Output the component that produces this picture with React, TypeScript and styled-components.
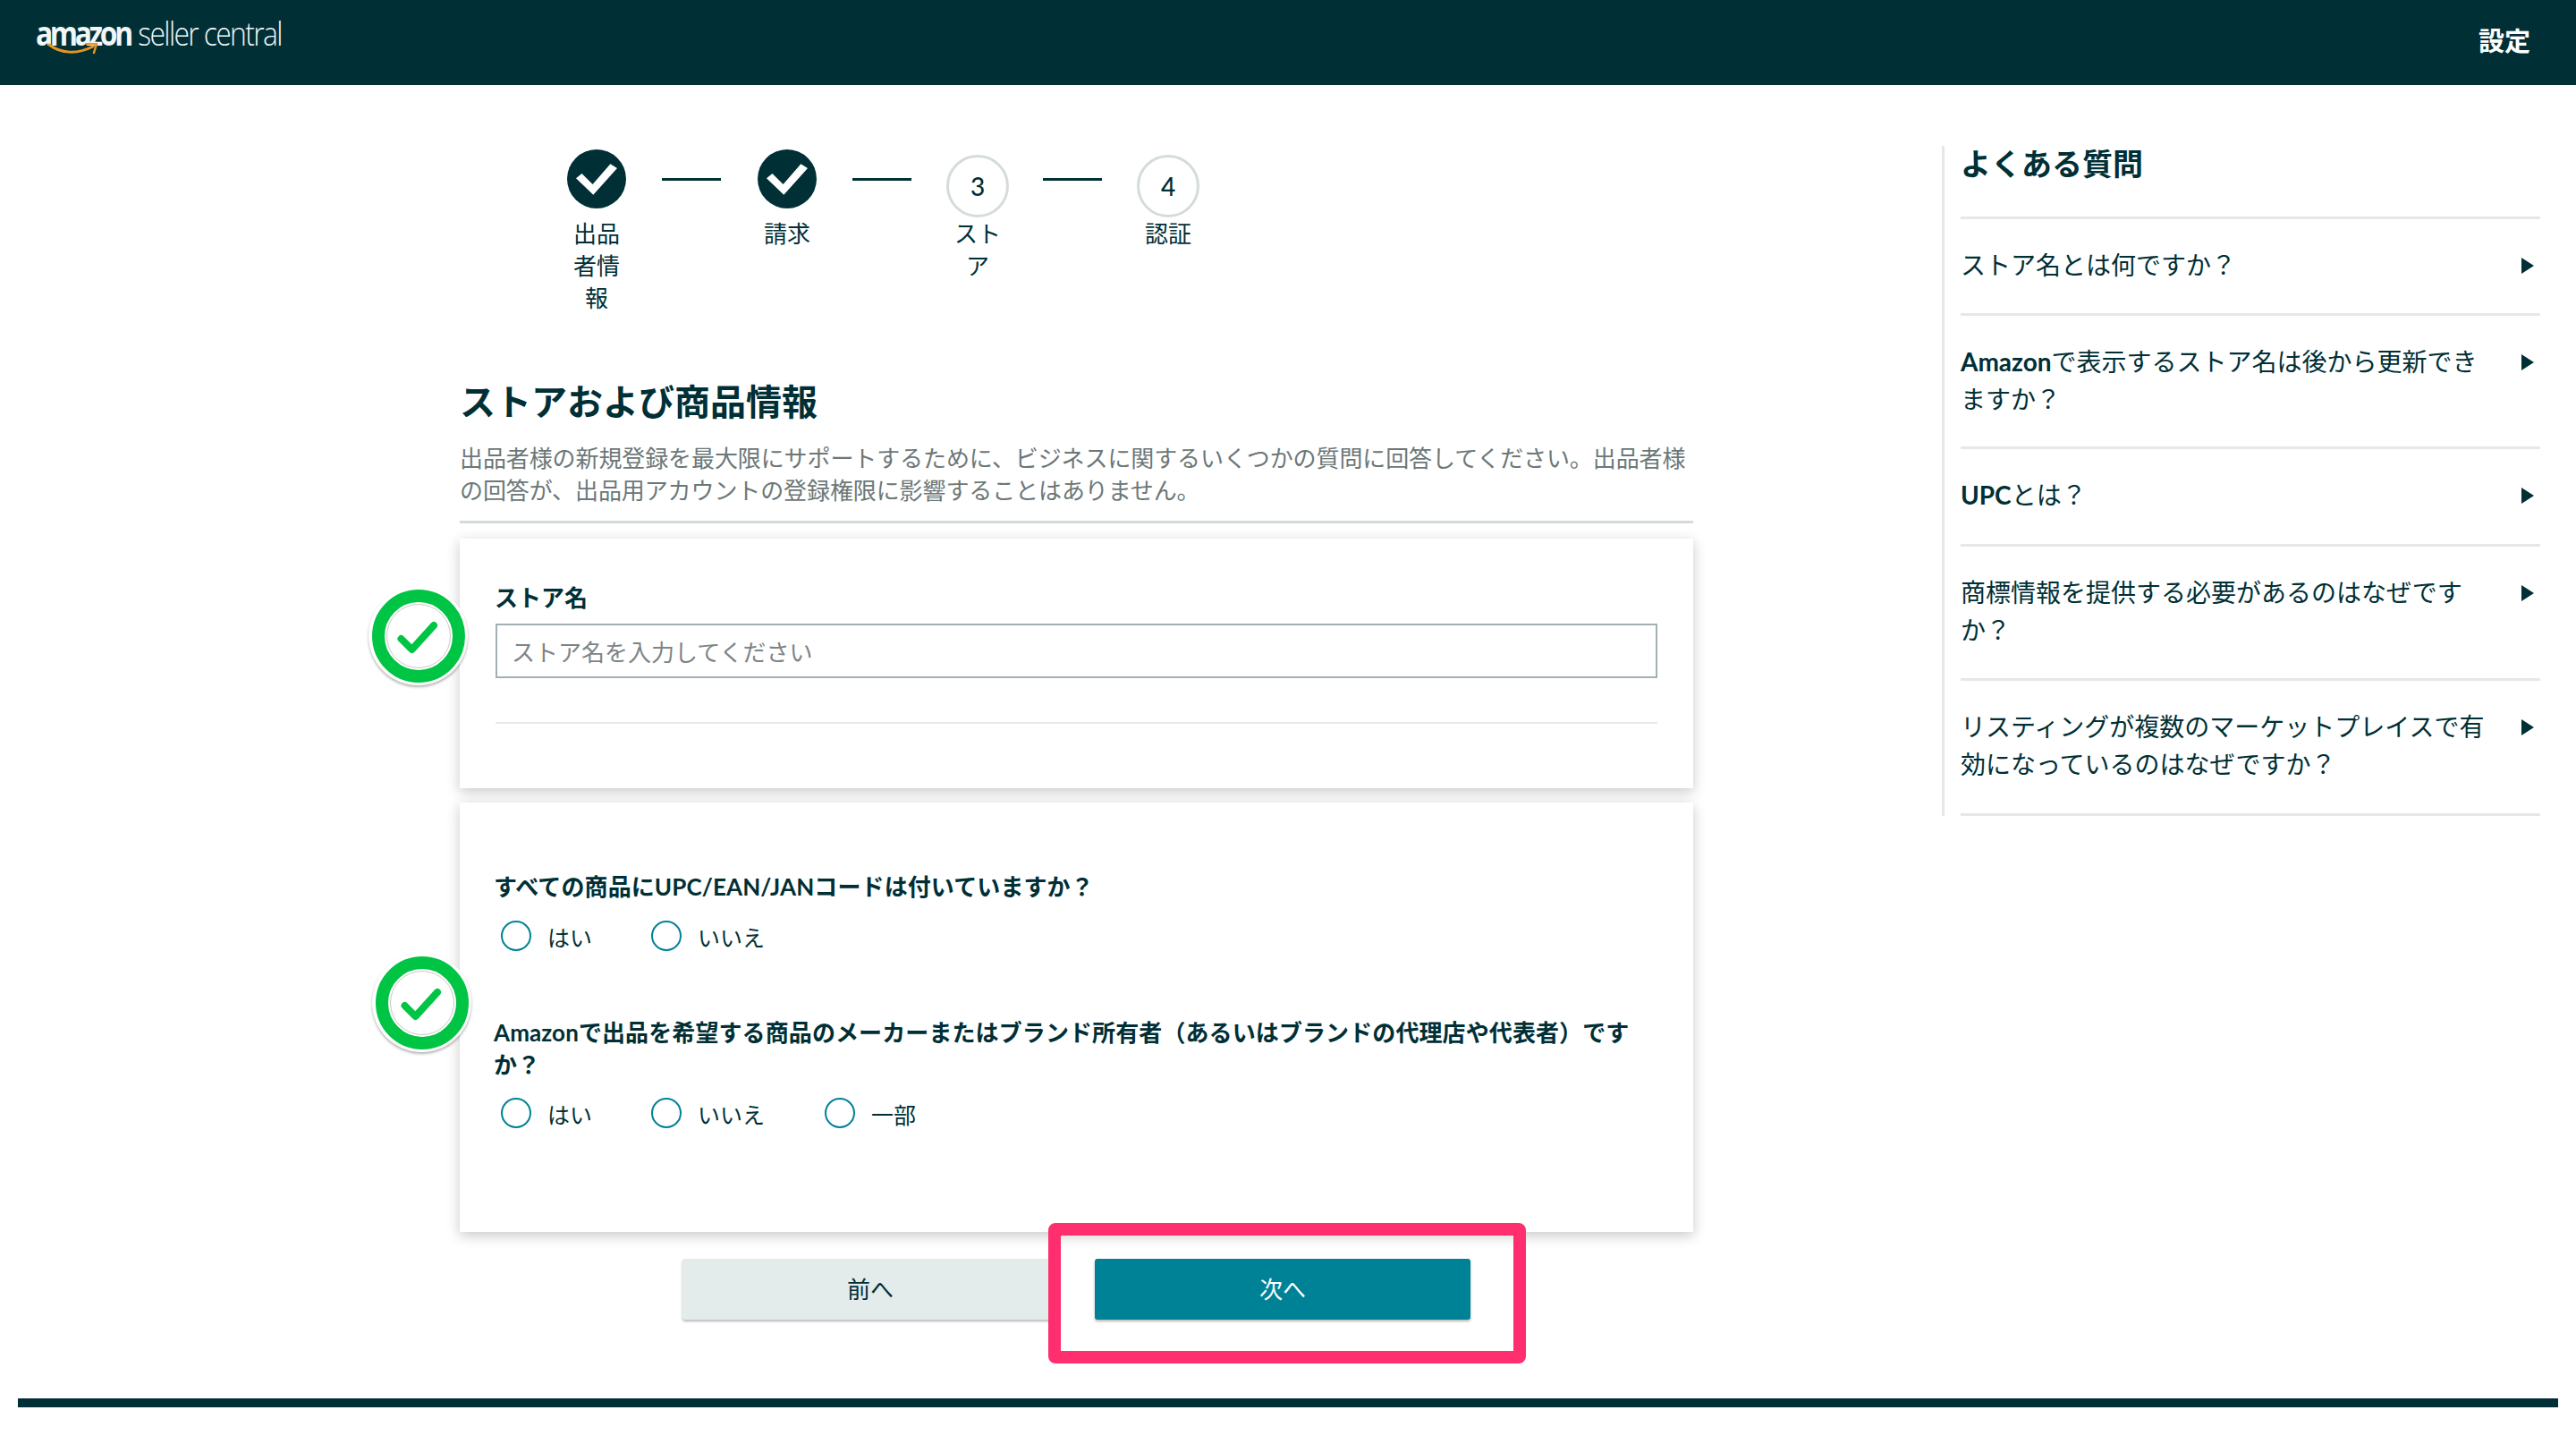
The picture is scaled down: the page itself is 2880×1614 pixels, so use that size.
import React from "react";
import styled, { createGlobalStyle } from "styled-components";

const Global = createGlobalStyle`
  html, body { margin: 0; padding: 0; background: #fff; }
  body { font-family: "Noto Sans CJK JP", "Noto Sans", sans-serif; color: #002f36; }
  * { box-sizing: border-box; }
`;
const INK = "#002f36";
const JP = `"Noto Sans CJK JP", "Noto Sans", sans-serif`;
const MIX = `Lato, "Noto Sans CJK JP", sans-serif`;

const Page = styled.div`width: 2880px; height: 1614px; overflow: hidden; display: flex; flex-direction: column; position: relative;`;
const Header = styled.header`height: 95px; background: ${INK}; display: flex; justify-content: space-between; padding: 0 51px 0 40px; flex: none;`;
const Logo = styled.div`position: relative; width: 276px; height: 66px; margin-top: 17px; color: #f2f6f6; white-space: nowrap;`;
const LogoText = styled.div`display: inline-block; font-family: "Open Sans", sans-serif; font-size: 37px; line-height: 40px; transform: scaleX(0.86); transform-origin: left center;`;
const LogoBold = styled.span`font-weight: 700; letter-spacing: -3.9px;`;
const LogoLight = styled.span`font-weight: 300; margin-left: 10px; letter-spacing: -1.9px;`;
const LogoArrow = styled.svg`position: absolute; left: 14px; top: 31px; width: 56px; height: 18px;`;
const Settings = styled.div`font: 700 29px/41px ${JP}; color: #fff; margin-top: 24px;`;

const Main = styled.main`display: flex; flex: 1; align-items: flex-start; position: relative;`;
const Left = styled.div`margin-left: 514px; width: 1379px; display: flex; flex-direction: column; position: relative;`;

const Stepper = styled.ol`list-style: none; margin: 72px 0 0; padding: 0 0 0 120px; display: flex; height: 256px; align-items: flex-start;`;
const Step = styled.li`width: 66px; display: flex; flex-direction: column; align-items: center;`;
const DoneCircle = styled.span`width: 66px; height: 66px; border-radius: 50%; background: ${INK}; display: flex; align-items: center; justify-content: center;`;
const NumCircle = styled.span`width: 70px; height: 70px; margin-top: 6px; border-radius: 50%; flex: none; background: #fff; border: 3px solid #d5dbdb; display: flex; align-items: center; justify-content: center; font: 500 28px/1 Lato, sans-serif; color: ${INK};`;
const StepLabel = styled.span<{ $pull?: boolean }>`width: 54px; margin-top: ${p => (p.$pull ? "-1px" : "9px")}; text-align: center; font: 400 26px/36px ${JP}; color: ${INK};`;
const Connector = styled.span`width: 66px; height: 3px; margin: 32px 41px 0 40px; background: ${INK}; flex: none;`;

const Title = styled.h1`margin: 0; font: 700 40px/48px ${JP}; color: ${INK};`;
const Desc = styled.p`margin: 22px 0 0; font: 400 26px/36px ${JP}; color: #6c7778; width: 1379px; letter-spacing: -0.1px;`;
const Rule = styled.div`height: 3px; background: #d5dbdb; margin-top: 17px;`;
const Card = styled.section<{ $h: number; $top: number }>`height: ${p => p.$h}px; margin-top: ${p => p.$top}px; padding: 0 40px; background: #fff; box-shadow: 0 4px 14px rgba(0,0,0,.22); position: relative; display: flex; flex-direction: column;`;
const FieldLabel = styled.label`display: block; margin-top: 47px; margin-left: -1px; font: 700 26px/36px ${JP}; color: ${INK};`;
const Field = styled.input`display: block; width: 1299px; height: 61px; margin-top: 12px; padding: 0 16px; border: 2px solid #a2b0b3; background: #fff; outline: none; font: 400 26px ${JP}; color: ${INK}; &::placeholder { color: #7d8485; opacity: 1; }`;
const CardRule = styled.div`height: 2px; background: #e7e9e9; margin-top: 49px; width: 1299px;`;
const Question = styled.div<{ $top: number }>`margin-top: ${p => p.$top}px; margin-left: -2px; font: 700 26px/36px ${MIX}; letter-spacing: 0.1px; color: ${INK}; width: 1300px;`;
const Options = styled.div<{ $top: number }>`display: flex; margin: ${p => p.$top}px 0 0 6px; height: 36px; align-items: center;`;
const Option = styled.label<{ $w: number }>`width: ${p => p.$w}px; display: flex; align-items: center; font: 400 25px/36px ${JP}; color: ${INK}; flex: none;`;
const Radio = styled.span`width: 34px; height: 34px; border-radius: 50%; border: 2px solid #008296; background: #fff; margin-right: 18px; flex: none; position: relative; top: -1px;`;

const Badge = styled.div<{ $x: number; $y: number }>`position: absolute; left: ${p => p.$x}px; top: ${p => p.$y}px; width: 111px; height: 111px; border-radius: 50%; background: #fff; box-shadow: 0 2px 3px rgba(0,0,0,.3); display: flex; align-items: center; justify-content: center; z-index: 2;`;
const BadgeRing = styled.div`width: 104px; height: 104px; border-radius: 50%; border: 14px solid #00c443; display: flex; align-items: center; justify-content: center; flex: none;`;
const BadgeInner = styled.div`width: 72px; height: 72px; border-radius: 50%; border: 1px solid #c9c9c9; box-shadow: 0 0 0 1px #fff; display: flex; align-items: center; justify-content: center; flex: none;`;

const Actions = styled.div`display: flex; gap: 41px; margin: 30px 0 0 249px; position: relative;`;
const Btn = styled.button<{ $primary?: boolean }>`width: 420px; height: 68px; padding: 0 0 3px; border: 0; border-radius: 3px; font: 400 26px ${JP}; cursor: pointer; background: ${p => (p.$primary ? "#008296" : "#e3ebeb")}; color: ${p => (p.$primary ? "#fff" : INK)}; box-shadow: 0 2px 3px rgba(0,0,0,.28);`;
const Highlight = styled.div`position: absolute; left: 409px; top: -40px; width: 534px; height: 157px; border: 14px solid #ff2e6e; border-radius: 8px; pointer-events: none;`;

const Aside = styled.aside`margin: 68px 0 0 278px; width: 669px; border-left: 3px solid #e7e7e7; padding-left: 18px;`;
const FaqTitle = styled.h2`margin: 0; height: 82px; font: 700 34px/37px ${JP}; color: ${INK}; border-bottom: 3px solid #e7e7e7;`;
const FaqRow = styled.div<{ $h: number }>`height: ${p => p.$h}px; border-bottom: 3px solid #e7e7e7; display: flex; justify-content: space-between; align-items: flex-start; padding-top: 30px;`;
const FaqText = styled.div`width: 600px; font: 400 28px/42px ${MIX}; color: ${INK};`;
const FaqBold = styled.strong`font-weight: 700;`;
const Caret = styled.span`width: 0; height: 0; flex: none; margin: 13px 7px 0 0; border-top: 9px solid transparent; border-bottom: 9px solid transparent; border-left: 14px solid ${INK};`;

const Footer = styled.div`position: absolute; left: 20px; top: 1563px; width: 2840px; height: 10px; background: ${INK};`;

const Check = () => (
  <svg width="46" height="36" viewBox="0 0 46 36">
    <polygon points="0,17.3 6.5,12 18.6,24 38.4,1.3 46,6 19.3,35.7" fill="#fff" />
  </svg>
);
const GreenCheck = () => (
  <svg width="50" height="50" viewBox="0 0 50 50" fill="none">
    <path d="M5.5 28 L17.5 40 L42 13" stroke="#00c443" strokeWidth="8" strokeLinecap="round" strokeLinejoin="round" />
  </svg>
);
const GreenBadge = ({ x, y }: { x: number; y: number }) => (
  <Badge $x={x} $y={y}>
    <BadgeRing>
      <BadgeInner><GreenCheck /></BadgeInner>
    </BadgeRing>
  </Badge>
);

const faqs: { h: number; text: React.ReactNode }[] = [
  { h: 108, text: "ストア名とは何ですか？" },
  { h: 149, text: <><FaqBold>Amazon</FaqBold>で表示するストア名は後から更新できますか？</> },
  { h: 109, text: <><FaqBold>UPC</FaqBold>とは？</> },
  { h: 150, text: "商標情報を提供する必要があるのはなぜですか？" },
  { h: 151, text: "リスティングが複数のマーケットプレイスで有効になっているのはなぜですか？" },
];

export default function App() {
  return (
    <Page>
      <Global />
      <Header>
        <Logo>
          <LogoText><LogoBold>amazon</LogoBold><LogoLight>seller central</LogoLight></LogoText>
          <LogoArrow viewBox="0 0 56 18" fill="none">
            <path d="M1 2 C14 12 32 13 50 4" stroke="#e8931f" strokeWidth="3" strokeLinecap="round" />
            <path d="M43 1 L54 1 L51 11" stroke="#e8931f" strokeWidth="2.5" strokeLinecap="round" strokeLinejoin="round" />
          </LogoArrow>
        </Logo>
        <Settings>設定</Settings>
      </Header>
      <Main>
        <Left>
          <Stepper>
            <Step><DoneCircle><Check /></DoneCircle><StepLabel>出品者情報</StepLabel></Step>
            <Connector />
            <Step><DoneCircle><Check /></DoneCircle><StepLabel>請求</StepLabel></Step>
            <Connector />
            <Step><NumCircle>3</NumCircle><StepLabel $pull>ストア</StepLabel></Step>
            <Connector />
            <Step><NumCircle>4</NumCircle><StepLabel $pull>認証</StepLabel></Step>
          </Stepper>
          <Title>ストアおよび商品情報</Title>
          <Desc>出品者様の新規登録を最大限にサポートするために、ビジネスに関するいくつかの質問に回答してください。出品者様の回答が、出品用アカウントの登録権限に影響することはありません。</Desc>
          <Rule />
          <Card $h={279} $top={17}>
            <FieldLabel>ストア名</FieldLabel>
            <Field placeholder="ストア名を入力してください" />
            <CardRule />
          </Card>
          <Card $h={480} $top={16}>
            <Question $top={76}>すべての商品にUPC/EAN/JANコードは付いていますか？</Question>
            <Options $top={20}>
              <Option $w={168}><Radio />はい</Option>
              <Option $w={194}><Radio />いいえ</Option>
            </Options>
            <Question $top={71}>Amazonで出品を希望する商品のメーカーまたはブランド所有者（あるいはブランドの代理店や代表者）ですか？</Question>
            <Options $top={19}>
              <Option $w={168}><Radio />はい</Option>
              <Option $w={194}><Radio />いいえ</Option>
              <Option $w={120}><Radio />一部</Option>
            </Options>
          </Card>
          <GreenBadge x={-102} y={560} />
          <GreenBadge x={-98} y={970} />
          <Actions>
            <Btn>前へ</Btn>
            <Btn $primary>次へ</Btn>
            <Highlight />
          </Actions>
        </Left>
        <Aside>
          <FaqTitle>よくある質問</FaqTitle>
          {faqs.map((f, i) => (
            <FaqRow key={i} $h={f.h}>
              <FaqText>{f.text}</FaqText>
              <Caret />
            </FaqRow>
          ))}
        </Aside>
      </Main>
      <Footer />
    </Page>
  );
}
